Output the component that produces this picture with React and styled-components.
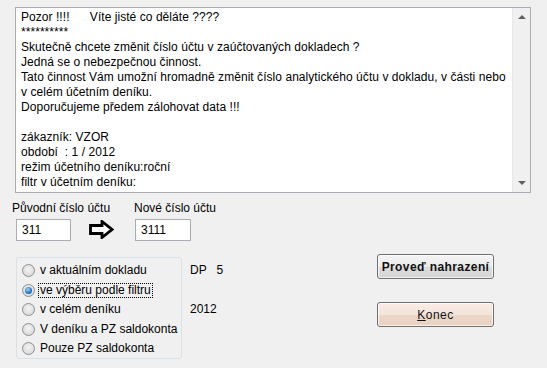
import React from "react";
import styled, { createGlobalStyle } from "styled-components";

const Global = createGlobalStyle`
  html, body { margin: 0; padding: 0; background: #f0f0f0; }
  body { font-family: "Liberation Sans", Arial, sans-serif; font-size: 12px; color: #000; }
`;

const Page = styled.div`
  width: 547px;
  height: 368px;
  box-sizing: border-box;
  padding: 7px 16px 0 15px;
  overflow: hidden;
`;

const MemoBox = styled.div`
  display: flex;
  height: 186px;
  box-sizing: border-box;
  border: 1px solid #abadb3;
  background: #fff;
`;

const MemoText = styled.div`
  flex: 1;
  padding: 2px 5px 0 5px;
  line-height: 15px;
  letter-spacing: 0.05px;
  white-space: pre;
  overflow: hidden;
`;

const ScrollBar = styled.div`
  width: 17px;
  background: #f0f0f0;
  border-left: 1px solid #e8e8e8;
  display: flex;
  flex-direction: column;
  justify-content: space-between;
  align-items: center;
  padding: 7px 0;
`;

const ScrollArrow = styled.span`
  width: 0;
  height: 0;
  border-left: 4px solid transparent;
  border-right: 4px solid transparent;
  ${(p) => (p.$down ? "border-top: 4px solid #606060;" : "border-bottom: 4px solid #606060;")}
`;

const Bottom = styled.div`
  display: flex;
`;

const LeftSide = styled.div`
  width: 362px;
`;

const AccountRow = styled.div`
  display: flex;
  align-items: flex-end;
  margin: 8px 0 0 -3px;
`;

const AccountField = styled.div`
  display: flex;
  flex-direction: column;
  width: ${(p) => p.$w}px;
`;

const FieldLabel = styled.div`
  line-height: 15px;
  white-space: nowrap;
`;

const AccountInput = styled.div`
  margin: 3px 0 0 ${(p) => p.$ml}px;
  width: ${(p) => p.$w}px;
  height: 22px;
  box-sizing: border-box;
  border: 1px solid #abadb3;
  background: #fff;
  padding-left: 5px;
  line-height: 20px;
`;

const ArrowBox = styled.div`
  width: 45px;
  height: 22px;
  margin-bottom: 1px;
  display: flex;
  align-items: center;
`;

const OptionsRow = styled.div`
  display: flex;
  margin-top: 16px;
  margin-left: 1px;
`;

const Group = styled.div`
  width: 166px;
  height: 102px;
  box-sizing: border-box;
  border: 1px solid #d9e1e6;
  border-radius: 3px;
  padding: 3px 0 0 5px;
`;

const RadioRow = styled.div`
  display: flex;
  align-items: center;
  height: 19.5px;
`;

const RadioDot = styled.span`
  width: 13px;
  height: 13px;
  box-sizing: border-box;
  border-radius: 50%;
  border: 1px solid #8e8f8f;
  background: radial-gradient(circle at 50% 40%, #f4f4f4 0%, #dcdcdc 70%, #cfcfcf 100%);
  margin-right: 3px;
  display: flex;
  align-items: center;
  justify-content: center;
  &::after {
    content: "";
    display: ${(p) => (p.$checked ? "block" : "none")};
    width: 7px;
    height: 7px;
    border-radius: 50%;
    background: radial-gradient(circle at 40% 35%, #a9d6f5 0%, #2a7bc6 55%, #0b4f92 100%);
  }
`;

const RadioLabel = styled.span`
  line-height: 13px;
  padding: 0 1px;
  white-space: nowrap;
  border: 1px dotted ${(p) => (p.$focus ? "#000" : "transparent")};
`;

const SideValues = styled.div`
  margin-left: 8px;
  padding-top: 6px;
  display: flex;
  flex-direction: column;
`;

const SideValue = styled.div`
  height: 19.5px;
  line-height: 15px;
  white-space: pre;
`;

const ButtonColumn = styled.div`
  display: flex;
  flex-direction: column;
  gap: 23px;
  margin-top: 61px;
`;

const Button = styled.div`
  width: 117px;
  height: 25px;
  box-sizing: border-box;
  border: 1px solid #707070;
  border-radius: 3px;
  display: flex;
  align-items: center;
  justify-content: center;
  font-weight: ${(p) => (p.$bold ? "bold" : "normal")};
  letter-spacing: ${(p) => (p.$bold ? "0.4px" : "0.5px")};
  color: #111;
  background: ${(p) =>
    p.$warm
      ? "linear-gradient(#f8ede6 0%, #f4e4da 50%, #ecd6c8 51%, #e8d2c4 100%)"
      : "linear-gradient(#f4f4f4 0%, #ebebeb 50%, #dddddd 51%, #d4d4d4 100%)"};
  box-shadow: inset 0 0 0 1px rgba(255, 255, 255, 0.7);
`;

const memo = [
  "Pozor !!!!      Víte jisté co děláte ????",
  "**********",
  "Skutečně chcete změnit číslo účtu v zaúčtovaných dokladech ?",
  "Jedná se o nebezpečnou činnost.",
  "Tato činnost Vám umožní hromadně změnit číslo analytického účtu v dokladu, v části nebo",
  "v celém účetním deníku.",
  "Doporučujeme předem zálohovat data !!!",
  "",
  "zákazník: VZOR",
  "období  : 1 / 2012",
  "režim účetního deníku:roční",
  "filtr v účetním deníku:",
].join("\n");

const options = [
  "v aktuálním dokladu",
  "ve výběru podle filtru",
  "v celém deníku",
  "V deníku a PZ saldokonta",
  "Pouze PZ saldokonta",
];

export default function App() {
  return (
    <Page>
      <Global />
      <MemoBox>
        <MemoText>{memo}</MemoText>
        <ScrollBar>
          <ScrollArrow />
          <ScrollArrow $down />
        </ScrollBar>
      </MemoBox>
      <Bottom>
        <LeftSide>
          <AccountRow>
            <AccountField $w={77}>
              <FieldLabel>Původní číslo účtu</FieldLabel>
              <AccountInput $ml={4} $w={55}>311</AccountInput>
            </AccountField>
            <ArrowBox>
              <svg width="25" height="19" viewBox="0 0 25 19">
                <polygon
                  points="1.5,5.5 13,5.5 13,1.5 23,9.5 13,17.5 13,13.5 1.5,13.5"
                  fill="#fff"
                  stroke="#000"
                  strokeWidth="2.8"
                  strokeLinejoin="miter"
                />
              </svg>
            </ArrowBox>
            <AccountField $w={90}>
              <FieldLabel>Nové číslo účtu</FieldLabel>
              <AccountInput $ml={1} $w={56}>3111</AccountInput>
            </AccountField>
          </AccountRow>
          <OptionsRow>
            <Group>
              {options.map((o, i) => (
                <RadioRow key={o}>
                  <RadioDot $checked={i === 1} />
                  <RadioLabel $focus={i === 1}>{o}</RadioLabel>
                </RadioRow>
              ))}
            </Group>
            <SideValues>
              <SideValue>{"DP   5"}</SideValue>
              <SideValue />
              <SideValue>2012</SideValue>
            </SideValues>
          </OptionsRow>
        </LeftSide>
        <ButtonColumn>
          <Button $bold>Proveď nahrazení</Button>
          <Button $warm>
            <span>
              <u>K</u>onec
            </span>
          </Button>
        </ButtonColumn>
      </Bottom>
    </Page>
  );
}
